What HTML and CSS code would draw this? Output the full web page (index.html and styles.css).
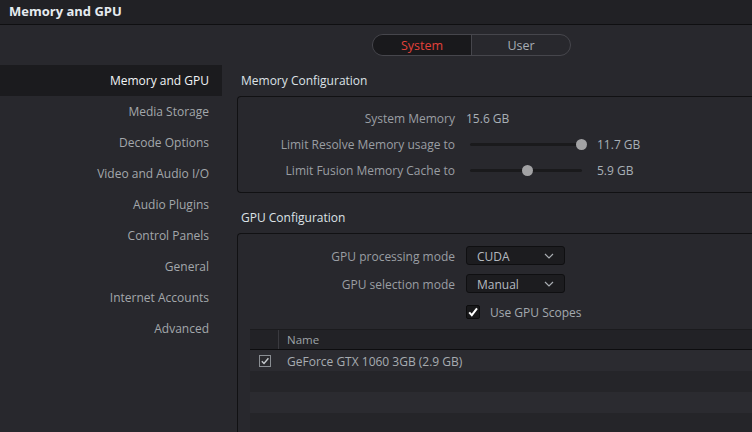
FILE: index.html
```html
<!DOCTYPE html>
<html>
<head>
<meta charset="utf-8">
<link rel="stylesheet" href="styles.css">
</head>
<body>
<div class="titlebar">Memory and GPU</div>
<div class="tabs-row">
  <div class="toggle">
    <div class="tab active">System</div>
    <div class="tab">User</div>
  </div>
</div>
<div class="main">
  <nav class="sidebar">
    <div class="nav-item selected">Memory and GPU</div>
    <div class="nav-item">Media Storage</div>
    <div class="nav-item">Decode Options</div>
    <div class="nav-item">Video and Audio I/O</div>
    <div class="nav-item">Audio Plugins</div>
    <div class="nav-item">Control Panels</div>
    <div class="nav-item">General</div>
    <div class="nav-item">Internet Accounts</div>
    <div class="nav-item">Advanced</div>
  </nav>
  <section class="content">
    <div class="heading first">Memory Configuration</div>
    <div class="panel mem-panel">
      <div class="row">
        <div class="label">System Memory</div>
        <div class="value">15.6 GB</div>
      </div>
      <div class="row">
        <div class="label">Limit Resolve Memory usage to</div>
        <div class="slider"><div class="track"><div class="knob" style="left: 99%"></div></div></div>
        <div class="value">11.7 GB</div>
      </div>
      <div class="row">
        <div class="label">Limit Fusion Memory Cache to</div>
        <div class="slider"><div class="track"><div class="knob" style="left: 51%"></div></div></div>
        <div class="value">5.9 GB</div>
      </div>
    </div>
    <div class="heading second">GPU Configuration</div>
    <div class="panel gpu-panel">
      <div class="frow">
        <div class="label">GPU processing mode</div>
        <div class="dropdown"><span>CUDA</span>
          <svg width="10" height="6" viewBox="0 0 10 6"><path d="M1 1 L5 5 L9 1" fill="none" stroke="#a9adb2" stroke-width="1.2"/></svg>
        </div>
      </div>
      <div class="frow">
        <div class="label">GPU selection mode</div>
        <div class="dropdown"><span>Manual</span>
          <svg width="10" height="6" viewBox="0 0 10 6"><path d="M1 1 L5 5 L9 1" fill="none" stroke="#a9adb2" stroke-width="1.2"/></svg>
        </div>
      </div>
      <div class="frow">
        <div class="label"></div>
        <div class="check-wrap">
          <div class="checkbox">
            <svg width="12" height="12" viewBox="0 0 12 12"><path d="M2.2 6.4 L4.8 9.2 L10 2.4" fill="none" stroke="#ffffff" stroke-width="2"/></svg>
          </div>
          <span class="check-label">Use GPU Scopes</span>
        </div>
      </div>
      <div class="table">
        <div class="thead">
          <div class="cell-check"></div>
          <div class="cell-name">Name</div>
        </div>
        <div class="trow odd">
          <div class="cell-check"><div class="small-check">
            <svg width="10" height="10" viewBox="0 0 10 10"><path d="M1.8 5.2 L4 7.4 L8.4 2.2" fill="none" stroke="#c8ccd0" stroke-width="1.4"/></svg>
          </div></div>
          <div class="cell-name">GeForce GTX 1060 3GB (2.9 GB)</div>
        </div>
        <div class="trow even"></div>
        <div class="trow odd"></div>
        <div class="trow even"></div>
      </div>
    </div>
  </section>
</div>
</body>
</html>
```
FILE: styles.css
```css
* { box-sizing: border-box; }
html, body {
  margin: 0;
  padding: 0;
  width: 752px;
  height: 432px;
  overflow: hidden;
  background: #28282d;
  font-family: "Open Sans", "Noto Sans", sans-serif;
  font-size: 12px;
  color: #a3a7ab;
}
.titlebar {
  height: 25px;
  background: #212125;
  border-bottom: 1px solid #0f0f11;
  color: #e6ebf0;
  font-weight: bold;
  font-size: 13px;
  line-height: 23px;
  padding-left: 9px;
}
.tabs-row {
  padding-top: 9px;
  padding-left: 372px;
  height: 31px;
}
.toggle {
  display: flex;
  width: 199px;
  height: 22px;
  border: 1px solid #46464c;
  border-radius: 11px;
  overflow: hidden;
}
.tab {
  flex: 1;
  text-align: center;
  line-height: 20px;
  padding-top: 1px;
  font-size: 12.5px;
  color: #a7adb3;
}
.tab.active {
  background: #19191c;
  color: #e2413a;
  border-right: 1px solid #46464c;
}
.main {
  display: flex;
  padding-top: 9px;
}
.sidebar {
  width: 222px;
  flex: none;
}
.nav-item {
  height: 31px;
  line-height: 31px;
  text-align: right;
  padding-right: 13px;
  font-size: 12px;
  color: #a3a7ab;
}
.nav-item.selected {
  background: #1b1b1e;
  color: #f2f4f6;
}
.content {
  flex: 1;
  padding-left: 15px;
}
.heading {
  color: #dde2e7;
  font-size: 12px;
  line-height: 14px;
  padding-left: 4px;
}
.heading.first { height: 31px; padding-top: 9px; }
.heading.second { height: 40px; padding-top: 18px; }
.panel {
  border: 1px solid #111113;
  border-right: none;
  border-radius: 4px 0 0 4px;
}
.mem-panel {
  height: 97px;
  padding-top: 8px;
}
.row {
  display: flex;
  align-items: center;
  height: 26px;
}
.label {
  width: 217px;
  flex: none;
  text-align: right;
  color: #9a9ea3;
  font-size: 12px;
  margin-right: 11px;
}
.value {
  color: #a9b0b7;
  font-size: 12px;
}
.slider {
  width: 116px;
  padding-left: 4px;
  margin-right: 15px;
}
.track {
  position: relative;
  height: 3px;
  background: #1a1a1c;
  border-radius: 2px;
}
.knob {
  position: absolute;
  top: -4px;
  width: 11px;
  height: 11px;
  margin-left: -5px;
  border-radius: 50%;
  background: #a2a2a4;
}
.gpu-panel {
  height: 220px;
  padding-top: 12px;
  border-bottom: none;
  border-radius: 4px 0 0 0;
}
.frow {
  display: flex;
  align-items: center;
  height: 19px;
  margin-bottom: 9px;
}
.frow .label { padding-top: 1px; }
.frow:nth-child(3) { margin-top: 1px; margin-bottom: 8px; }
.dropdown {
  width: 99px;
  height: 19px;
  background: #1c1c1f;
  border: 1px solid #0f0f11;
  border-radius: 3px;
  display: flex;
  align-items: center;
  justify-content: space-between;
  padding-left: 10px;
  padding-right: 10px;
  padding-top: 1px;
  color: #b4bac0;
  font-size: 12px;
}
.dropdown svg { margin-top: -1px; }
.check-wrap {
  display: flex;
  align-items: center;
}
.checkbox {
  width: 14px;
  height: 14px;
  background: #18181a;
  border: 1px solid #0c0c0d;
  border-radius: 2px;
  display: flex;
  align-items: center;
  justify-content: center;
}
.check-label {
  margin-left: 10px;
  padding-top: 1px;
  color: #a3a9af;
  font-size: 12px;
}
.table {
  margin-left: 12px;
}
.thead {
  display: flex;
  height: 21px;
  background: #222226;
  border-top: 1px solid #1b1b1e;
  border-bottom: 1px solid #0d0d0f;
}
.thead .cell-check {
  border-right: 1px solid #3a3a3f;
}
.cell-check {
  width: 29px;
  flex: none;
  display: flex;
  align-items: center;
  justify-content: center;
}
.cell-name {
  padding-left: 8px;
  line-height: 19px;
  font-size: 11.5px;
  color: #9da2a7;
}
.trow {
  display: flex;
  height: 21px;
  align-items: center;
}
.trow .cell-name {
  color: #a7acb1;
  font-size: 12px;
  padding-top: 1px;
}
.trow.odd { background: #2b2b30; }
.trow.even { background: #252529; }
.small-check {
  width: 12px;
  height: 12px;
  border: 1px solid #8a8e93;
  background: #2a2a2e;
  display: flex;
  align-items: center;
  justify-content: center;
}
```
